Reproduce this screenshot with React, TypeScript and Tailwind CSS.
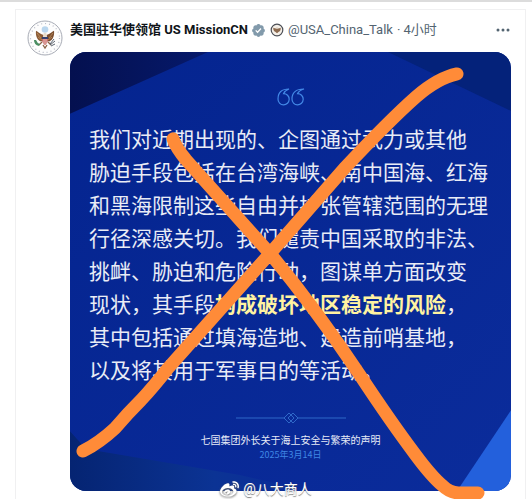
import { FaWeibo } from 'react-icons/fa';

const STATEMENT_BEFORE = [
  '我们对近期出现的、企图通过武力或其他',
  '胁迫手段包括在台湾海峡、南中国海、红海',
  '和黑海限制这些自由并扩张管辖范围的无理',
  '行径深感关切。我们谴责中国采取的非法、',
  '挑衅、胁迫和危险行动，图谋单方面改变',
];

const STATEMENT_AFTER = [
  '其中包括通过填海造地、建造前哨基地，',
  '以及将其用于军事目的等活动。',
];

function SealAvatar() {
  return (
    <svg viewBox="0 0 36 36" className="size-9 shrink-0" aria-hidden="true">
      <circle cx="18" cy="18" r="17" fill="#fdfdfd" stroke="#a7abb5" strokeWidth="1" />
      <circle cx="18" cy="18" r="14.5" fill="none" stroke="#b4b8c4" strokeWidth="1.2" strokeDasharray="1 3" />
      <circle cx="18" cy="9.5" r="3.3" fill="#b9d6ee" />
      <path d="M16.500 15C13 14 10.500 11.500 9 10.800C8.500 15 9.500 20 14 21.500L17 20Z" fill="#8a5a35" />
      <path d="M19.500 15C23 14 25.500 11.500 27 10.800C27.500 15 26.500 20 22 21.500L19 20Z" fill="#7b4e30" />
      <path d="M10 13l4 5M11 17l4 3M26 13l-4 5M25 17l-4 3" stroke="#c59a65" strokeWidth=".7" />
      <path d="M16.500 13.500Q18 12 19.500 13.500L20 17H16Z" fill="#e8dccb" />
      <path d="M15 17h6v4q-1 3-3 4q-2-1-3-4Z" fill="#c96a68" />
      <path d="M15 17h6v2h-6Z" fill="#34406f" />
      <path d="M17 19v5M19 19v5" stroke="#f5e4e0" strokeWidth=".7" />
      <path d="M15 22l-3 3M21 22l3 3M16 25l2 3 2-3" stroke="#8a6246" strokeWidth="1.3" fill="none" />
      <path d="M7 20q0 5 5 6l1-2q-3-1-4-4Z" fill="#4b8e63" />
      <path d="M23 25l5-4M23 24l4-5M24 26l4-2" stroke="#5c6470" strokeWidth="1" />
    </svg>
  );
}

function VerifiedBadge() {
  return (
    <svg viewBox="0 0 24 24" className="size-[15px] shrink-0" role="img" aria-label="认证账号">
      <path
        fill="#829aab"
        d="M22.25 12c0-1.43-.88-2.67-2.19-3.34.46-1.39.2-2.9-.81-3.91s-2.52-1.27-3.91-.81c-.66-1.31-1.91-2.19-3.34-2.19s-2.67.88-3.33 2.19c-1.4-.46-2.91-.2-3.92.81s-1.26 2.52-.8 3.91c-1.31.67-2.2 1.91-2.2 3.34s.89 2.67 2.2 3.34c-.46 1.39-.21 2.9.8 3.91s2.52 1.26 3.91.81c.67 1.31 1.91 2.19 3.34 2.19s2.68-.88 3.34-2.19c1.39.45 2.9.2 3.91-.81s1.27-2.52.81-3.91c1.31-.67 2.19-1.91 2.19-3.34zm-11.71 4.2L6.8 12.46l1.41-1.42 2.26 2.26 4.8-5.23 1.47 1.36-6.2 6.77z"
      />
    </svg>
  );
}

function AffiliateBadge() {
  return (
    <svg viewBox="0 0 14 14" className="size-3.5 shrink-0" aria-hidden="true">
      <circle cx="7" cy="7" r="5.8" fill="#f4efe8" stroke="#4b4e55" strokeWidth="1.2" />
      <path d="M3.300 4.800l2.200.8L7 4.800l1.500.8 2.200-.8q.3 3.200-1.900 3.900L7 10.300 5.200 8.700Q3 8 3.300 4.800Z" fill="#8d6b50" />
      <circle cx="7" cy="5" r="1" fill="#e6dccf" />
    </svg>
  );
}

function CardBackdrop() {
  return (
    <svg
      viewBox="0 0 441 440"
      preserveAspectRatio="none"
      className="absolute inset-0 size-full rounded-2xl"
      aria-hidden="true"
    >
      <defs>
        <linearGradient id="base" x1="0" y1="0" x2="1" y2="1">
          <stop offset="0" stopColor="#04248f" />
          <stop offset="1" stopColor="#0b2c9b" />
        </linearGradient>
        <linearGradient id="corner" x1="0" y1="0" x2="1" y2="0">
          <stop offset="0" stopColor="#04104f" />
          <stop offset="1" stopColor="#06196b" />
        </linearGradient>
        <linearGradient id="floor" x1="0" y1="0" x2="1" y2="0">
          <stop offset="0" stopColor="#052472" />
          <stop offset=".6" stopColor="#0b3394" />
          <stop offset="1" stopColor="#0b2c9b" />
        </linearGradient>
      </defs>
      <path d="M0 0H441V440H0Z" fill="url(#base)" />
      <path d="M0 0H138L0 62Z" fill="url(#corner)" />
      <path d="M318 0H441V59Z" fill="#04227a" />
      <path d="M0 380L16 398L170 424L240 440H0Z" fill="url(#floor)" />
      <path d="M441 359V440H387Z" fill="#2360dc" />
    </svg>
  );
}

function QuoteMark() {
  return (
    <svg viewBox="0 0 28 18" className="h-[18px] w-7" fill="none" stroke="#4388e6" strokeWidth="1.2" aria-hidden="true">
      <path d="M12 1Q1 1 1 11A5.600 5.600 0 1 0 6.600 5.600Q8 2.500 12 1Z" />
      <path d="M27 1Q15 1 15 11A5.600 5.600 0 1 0 20.600 5.600Q22 2.500 27 1Z" />
    </svg>
  );
}

function Divider() {
  return (
    <svg viewBox="0 0 110 12" className="h-3 w-[110px]" fill="none" stroke="#2f68c8" aria-hidden="true">
      <path d="M0 6H48M62 6H110" />
      <path d="M53 1L48 6L53 11L58 6ZM57 1L52 6L57 11L62 6Z" />
    </svg>
  );
}

// Hand-drawn cross over the statement
function CrossOut() {
  return (
    <svg
      viewBox="0 0 441 440"
      preserveAspectRatio="none"
      className="pointer-events-none absolute inset-0 size-full overflow-visible"
      fill="none"
      stroke="#ff8b38"
      strokeWidth="13"
      strokeLinecap="round"
      strokeLinejoin="round"
      aria-hidden="true"
    >
      <path d="M103 87Q106 96 116 108L200 202Q244 255 290 324Q321 371 345 403Q362 426 373 435Q379 441 388 442H408" />
      <path d="M13 400Q30 391 45 377Q58 362 71 349Q84 335 98 317L200 202L274 117Q320 68 346 45Q368 26 387 22" />
    </svg>
  );
}

function StatementCard() {
  return (
    <article className="relative flex flex-col items-center px-[19px] pt-9 pb-[29px] font-['Noto_Sans_CJK_SC',sans-serif]">
      <CardBackdrop />
      <div className="relative flex w-full flex-col items-center">
        <QuoteMark />
        <p className="mt-4 w-full text-[21px] leading-[33px] font-normal whitespace-nowrap text-[#e9ecf6]">
          {STATEMENT_BEFORE.map(line => (
            <span key={line} className="block">{line}</span>
          ))}
          <span className="block">
            现状，其手段<strong className="font-bold text-[#fff3a1]">构成破坏地区稳定的风险</strong>，
          </span>
          {STATEMENT_AFTER.map(line => (
            <span key={line} className="block">{line}</span>
          ))}
        </p>
        <div className="mt-[26px]">
          <Divider />
        </div>
        <p className="mt-2 text-[10px] leading-4 text-[#e6eaf6]">七国集团外长关于海上安全与繁荣的声明</p>
        <p className="text-[9px] leading-[14px] text-[#3f86e4]">2025年3月14日</p>
      </div>
      <CrossOut />
    </article>
  );
}

export default function App() {
  return (
    <div className="relative border-t-2 border-[#dcdcdc] bg-white px-[6px] pt-[7px] pl-[15px] font-['Roboto','Noto_Sans_CJK_SC',sans-serif]">
      <main className="flex gap-[7px] border-x border-t border-[#f0f0f1] pt-[10px] pr-[14px] pb-2 pl-[11px]">
        <SealAvatar />
        <div className="min-w-0 flex-1">
          <header className="flex h-5 items-center text-[13px] leading-5 whitespace-nowrap">
            <h1 className="font-bold text-[#0f1419]">美国驻华使领馆 US MissionCN</h1>
            <span className="ml-[3px] flex items-center gap-1">
              <VerifiedBadge />
              <AffiliateBadge />
            </span>
            <a href="#profile" className="ml-1 text-[#536471]">@USA_China_Talk</a>
            <span className="ml-1 text-[#536471]">· 4小时</span>
            <button type="button" aria-label="更多" className="mr-px ml-auto text-[#536471]">
              <svg viewBox="0 0 14 4" className="h-1 w-3.5" fill="currentColor">
                <circle cx="2" cy="2" r="1.5" />
                <circle cx="7" cy="2" r="1.5" />
                <circle cx="12" cy="2" r="1.5" />
              </svg>
            </button>
          </header>
          <div className="mt-3">
            <StatementCard />
          </div>
        </div>
      </main>
      <div className="absolute inset-x-0 bottom-0 flex items-center justify-center gap-1 text-[14px] leading-5 text-white [text-shadow:0_1px_1px_#777]">
        <FaWeibo className="size-[19px] drop-shadow-[0_1px_1px_#666]" aria-hidden="true" />
        <span>@八大商人</span>
      </div>
    </div>
  );
}
